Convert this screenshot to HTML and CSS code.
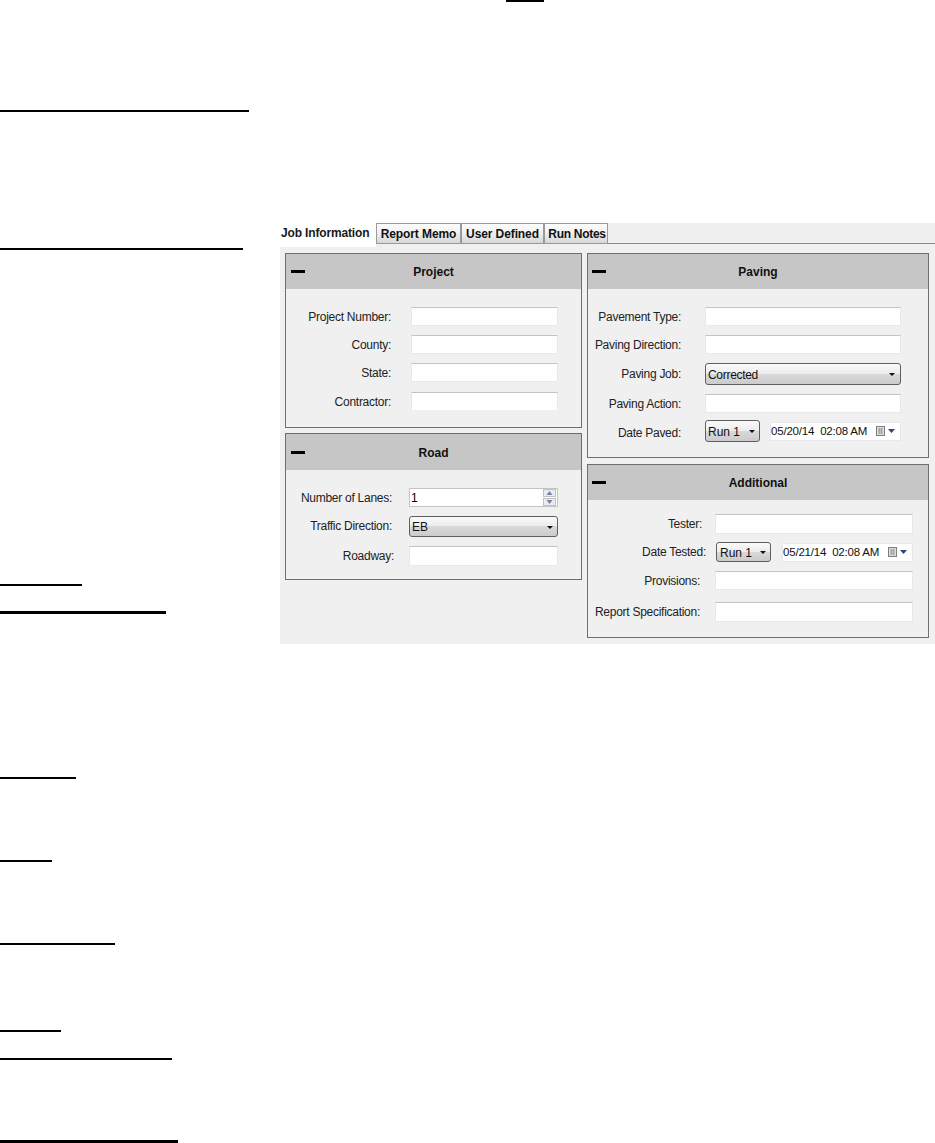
FILE: index.html
```html
<!DOCTYPE html>
<html lang="en">
<head>
<meta charset="utf-8">
<title>Job Information</title>
<link rel="stylesheet" href="styles.css">
</head>
<body>
<div class="top-mark"></div>
<div class="doc">
  <div class="rules">
    <div class="rule r1"></div>
    <div class="rule r2"></div>
    <div class="rule r3"></div>
    <div class="rule r4"></div>
    <div class="rule r5"></div>
    <div class="rule r6"></div>
    <div class="rule r7"></div>
    <div class="rule r8"></div>
    <div class="rule r9"></div>
    <div class="rule r10"></div>
  </div>
  <div class="widget">
    <div class="tabs">
      <div class="tab-active">Job Information</div>
      <div class="tab t-memo">Report Memo</div>
      <div class="tab t-user">User Defined</div>
      <div class="tab t-run">Run Notes</div>
      <div class="tab-rest"></div>
    </div>
    <div class="panels">
      <div class="col col-left">
        <section class="panel">
          <header class="panel-head"><span class="minus"></span><span class="panel-title">Project</span></header>
          <div class="fields f-project">
            <label class="lbl">Project Number:</label><div class="input"></div>
            <label class="lbl">County:</label><div class="input"></div>
            <label class="lbl">State:</label><div class="input"></div>
            <label class="lbl">Contractor:</label><div class="input short"></div>
          </div>
        </section>
        <section class="panel">
          <header class="panel-head tall"><span class="minus"></span><span class="panel-title">Road</span></header>
          <div class="fields f-road">
            <label class="lbl pad2">Number of Lanes:</label>
            <div class="spin"><span class="spin-val">1</span>
              <span class="spin-btns"><span class="spin-btn"><svg width="7" height="4" viewBox="0 0 7 4"><path d="M3.5 0 L6.5 4 H0.5Z" fill="#6f82b4"/></svg></span><span class="spin-btn"><svg width="7" height="4" viewBox="0 0 7 4"><path d="M0.5 0 H6.5 L3.5 4Z" fill="#6f82b4"/></svg></span></span>
            </div>
            <label class="lbl pad2">Traffic Direction:</label>
            <div class="select tall21"><span class="sel-text">EB</span><svg class="caret" width="6" height="3" viewBox="0 0 6 3"><path d="M0 0 H6 L3 3Z" fill="#111"/></svg></div>
            <label class="lbl">Roadway:</label><div class="input h20"></div>
          </div>
        </section>
      </div>
      <div class="col col-right">
        <section class="panel">
          <header class="panel-head"><span class="minus"></span><span class="panel-title">Paving</span></header>
          <div class="fields f-paving">
            <label class="lbl">Pavement Type:</label><div class="input"></div>
            <label class="lbl">Paving Direction:</label><div class="input"></div>
            <label class="lbl down2">Paving Job:</label>
            <div class="select tall22"><span class="sel-text narrow">Corrected</span><svg class="caret" width="6" height="3" viewBox="0 0 6 3"><path d="M0 0 H6 L3 3Z" fill="#111"/></svg></div>
            <label class="lbl">Paving Action:</label><div class="input"></div>
            <label class="lbl down4">Date Paved:</label>
            <div class="date-row gap10">
              <div class="select run w55a"><span class="sel-text">Run 1</span><svg class="caret" width="6" height="3" viewBox="0 0 6 3"><path d="M0 0 H6 L3 3Z" fill="#111"/></svg></div>
              <div class="date"><span class="date-text">05/20/14  02:08 AM</span>
                <svg class="cal" width="19" height="10" viewBox="0 0 19 10"><rect x="0.5" y="0.5" width="8" height="9" fill="#dcdcdc" stroke="#7f7f7f"/><path d="M2 3H7M2 5H7M2 7H7M3.5 2V8M5.5 2V8" stroke="#a4a4a4"/><path d="M12 3 H19 L15.5 7Z" fill="#34466e"/></svg>
              </div>
            </div>
          </div>
        </section>
        <section class="panel">
          <header class="panel-head"><span class="minus"></span><span class="panel-title">Additional</span></header>
          <div class="fields f-additional">
            <label class="lbl pad4">Tester:</label><div class="input h20"></div>
            <label class="lbl">Date Tested:</label>
            <div class="date-row gap11 nudge1">
              <div class="select run w55 wide-pad"><span class="sel-text">Run 1</span><svg class="caret" width="6" height="3" viewBox="0 0 6 3"><path d="M0 0 H6 L3 3Z" fill="#111"/></svg></div>
              <div class="date"><span class="date-text">05/21/14  02:08 AM</span>
                <svg class="cal" width="19" height="10" viewBox="0 0 19 10"><rect x="0.5" y="0.5" width="8" height="9" fill="#dcdcdc" stroke="#7f7f7f"/><path d="M2 3H7M2 5H7M2 7H7M3.5 2V8M5.5 2V8" stroke="#a4a4a4"/><path d="M12 3 H19 L15.5 7Z" fill="#34466e"/></svg>
              </div>
            </div>
            <label class="lbl pad6">Provisions:</label><div class="input"></div>
            <label class="lbl pad6">Report Specification:</label><div class="input h20"></div>
          </div>
        </section>
      </div>
    </div>
  </div>
</div>
</body>
</html>
```

FILE: styles.css
```css
html, body { margin: 0; padding: 0; }
body {
  width: 935px;
  height: 1143px;
  overflow: hidden;
  background: #fff;
  font-family: "Liberation Sans", Arial, sans-serif;
  font-size: 12px;
  color: #1a1a1a;
}
.top-mark { width: 38px; height: 2px; margin-left: 506px; background: #000; }
.doc { display: flex; align-items: flex-start; }

.rules { width: 280px; flex: none; }
.rule { background: #000; height: 2px; }
.r1 { width: 249px; margin-top: 108px; }
.r2 { width: 243px; margin-top: 136px; }
.r3 { width: 82px; margin-top: 334px; }
.r4 { width: 166px; margin-top: 25px; height: 3px; }
.r5 { width: 76px; margin-top: 163px; }
.r6 { width: 52px; margin-top: 81px; }
.r7 { width: 115px; margin-top: 81px; }
.r8 { width: 61px; margin-top: 85px; }
.r9 { width: 172px; margin-top: 26px; }
.r10 { width: 178px; margin-top: 80px; height: 3px; }

.widget {
  width: 655px;
  height: 421px;
  margin-top: 221px;
  background: #f0f0f0;
  flex: none;
}
.tabs { display: flex; align-items: flex-start; height: 24px; }
.tab-active {
  width: 96px;
  height: 24px;
  background: #fff;
  font-weight: bold;
  letter-spacing: -0.15px;
  line-height: 20px;
  padding-left: 1px;
  box-sizing: border-box;
  flex: none;
}
.tab {
  height: 21px;
  box-sizing: border-box;
  border: 1px solid #9a9a9a;
  background: linear-gradient(#fdfdfd, #f2f2f2 45%, #d6d6d6);
  font-weight: bold;
  letter-spacing: -0.1px;
  line-height: 20px;
  text-align: center;
  color: #111;
  flex: none;
}
.t-memo { width: 85px; }
.t-user { width: 83px; }
.t-run { width: 64px; padding-left: 2px; letter-spacing: -0.3px; }
.tab-rest { flex: 1; height: 21px; border-bottom: 1px solid #8a8a8a; box-sizing: border-box; }

.panels { display: flex; gap: 5px; padding: 6px 0 0 5px; }
.col { display: flex; flex-direction: column; }
.col-left { width: 297px; gap: 5px; }
.col-right { width: 342px; gap: 6px; }
.panel { border: 1px solid #6e6e6e; }
.panel-head {
  position: relative;
  height: 35px;
  background: #c6c6c6;
  display: flex;
  align-items: center;
  justify-content: center;
}
.panel-head.tall { height: 36px; padding-top: 2px; box-sizing: border-box; }
.panel-title { font-weight: bold; color: #111; }
.minus {
  position: absolute;
  left: 5px;
  top: 16px;
  width: 14px;
  height: 3px;
  background: #000;
}
.col-right .minus { left: 4px; }
.panel-head.tall .minus { top: 17px; }

.fields { display: grid; justify-items: stretch; align-items: start; }
.f-project {
  padding: 18px 0 17px;
  grid-template-columns: 105px 147px;
  column-gap: 20px;
  grid-template-rows: 28px 28px 29px 18px;
}
.f-road {
  padding: 18px 0 13px;
  grid-template-columns: 108px 149px;
  column-gap: 15px;
  grid-template-rows: 28px 30px 20px;
}
.f-paving {
  padding: 18px 0 15px;
  grid-template-columns: 93px 196px;
  column-gap: 24px;
  grid-template-rows: 28px 28px 31px 26px 22px;
}
.f-additional {
  padding: 14px 0 15px;
  grid-template-columns: 118px 198px;
  column-gap: 9px;
  grid-template-rows: 28px 29px 31px 20px;
}
.lbl {
  text-align: right;
  letter-spacing: -0.27px;
  line-height: 19px;
  padding-top: 1px;
  white-space: nowrap;
  color: #222;
}
.pad2 { padding-right: 2px; }
.pad4 { padding-right: 4px; }
.pad6 { padding-right: 6px; }
.down2 { padding-top: 2px; }
.down4 { padding-top: 4px; }

.input {
  height: 19px;
  box-sizing: border-box;
  background: #fff;
  border: 1px solid #e6e8ee;
  border-top-color: #c4c4c4;
}
.input.short { height: 18px; border-bottom: 0; }
.input.h20 { height: 20px; }

.spin {
  height: 19px;
  box-sizing: border-box;
  border: 1px solid #c4c4c4;
  background: #fff;
  display: flex;
  align-items: center;
  justify-content: space-between;
  padding-left: 1px;
  color: #000;
}
.spin-btns { display: flex; flex-direction: column; width: 13px; margin-right: 1px; gap: 1px; }
.spin-btn {
  height: 8px;
  box-sizing: border-box;
  border: 1px solid #c0c0c0;
  background: #ececec;
  display: flex;
  align-items: center;
  justify-content: center;
}

.select {
  box-sizing: border-box;
  height: 20px;
  border: 1px solid #5f5f5f;
  border-radius: 3px;
  background: linear-gradient(#fafafa, #ececec 48%, #d9d9d9 50%, #cbcbcb);
  display: flex;
  align-items: center;
  justify-content: space-between;
  padding: 1px 4px 0 2px;
  color: #111;
}
.tall21 { height: 21px; }
.tall22 { height: 22px; padding-left: 2px; padding-right: 5px; }
.narrow { letter-spacing: -0.3px; }
.run { height: 22px; flex: none; padding-left: 2px; }
.w55a { width: 55px; }
.w55 { width: 55px; height: 20px; }
.wide-pad { padding-left: 3px; }
.caret { flex: none; }

.date-row { display: flex; align-items: center; }
.gap10 { gap: 10px; }
.gap11 { gap: 11px; }
.nudge1 { margin-left: 1px; height: 20px; }
.date {
  flex: 1;
  height: 19px;
  box-sizing: border-box;
  background: #fff;
  border: 1px solid #e6e8ee;
  display: flex;
  align-items: center;
  justify-content: space-between;
  padding: 0 5px 0 0;
  font-size: 11.5px;
  letter-spacing: -0.2px;
}
.date-text { white-space: pre; color: #111; }
.cal { flex: none; }
```
